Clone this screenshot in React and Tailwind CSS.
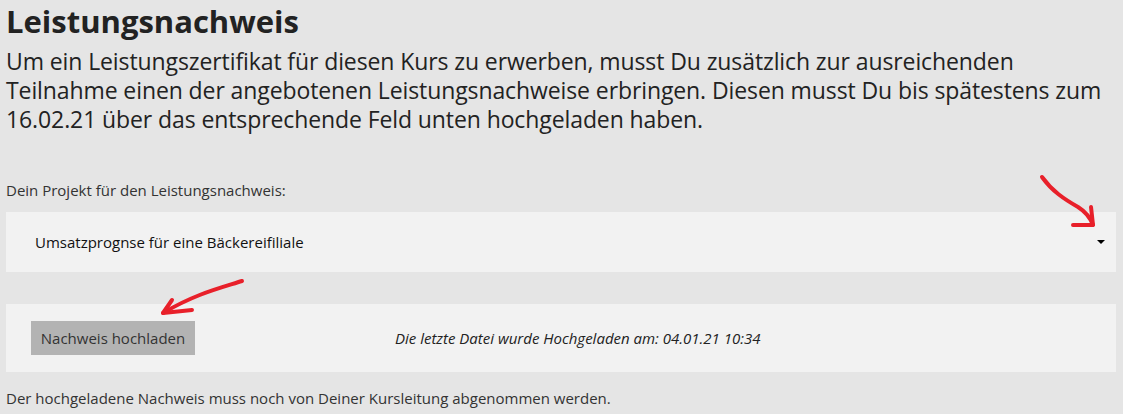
const font = { fontFamily: '"Open Sans", "Noto Sans", sans-serif' }

const ArrowToSelect = () => (
  <svg className="absolute left-[1030px] top-[165px] pointer-events-none" width="80" height="70" viewBox="0 0 80 70">
    <path
      d="M12 12 C 22 26, 34 34, 48 42 C 56 47, 60 52, 63 60"
      fill="none"
      stroke="#e8202a"
      strokeWidth="4"
      strokeLinecap="round"
    />
    <path d="M61 42 L 63 60 L 43 60" fill="none" stroke="#e8202a" strokeWidth="4" strokeLinecap="round" strokeLinejoin="round" />
  </svg>
)

const ArrowToButton = () => (
  <svg className="absolute left-[150px] top-[270px] pointer-events-none" width="110" height="60" viewBox="0 0 110 60">
    <path
      d="M92 11 C 70 18, 45 24, 13 43"
      fill="none"
      stroke="#e8202a"
      strokeWidth="4"
      strokeLinecap="round"
    />
    <path d="M22 30 L 13 43 L 42 40" fill="none" stroke="#e8202a" strokeWidth="4" strokeLinecap="round" strokeLinejoin="round" />
  </svg>
)

export default function App() {
  return (
    <div className="relative w-[1123px] h-[414px] overflow-hidden bg-[#e5e5e5] text-[#222]" style={font}>
      <div className="px-[6px]">
        <h1 className="text-[31px] font-bold leading-[40px] pt-[1px]">Leistungsnachweis</h1>
        <p className="mt-[6px] text-[23px] leading-[29px] whitespace-nowrap tracking-[-0.1px]">
          Um ein Leistungszertifikat für diesen Kurs zu erwerben, musst Du zusätzlich zur ausreichenden
          <br />
          Teilnahme einen der angebotenen Leistungsnachweise erbringen. Diesen musst Du bis spätestens zum
          <br />
          16.02.21 über das entsprechende Feld unten hochgeladen haben.
        </p>

        <div className="mt-[46px] text-[15px] leading-[20px] text-[#333]">Dein Projekt für den Leistungsnachweis:</div>

        {/* Projekt-Auswahl */}
        <div className="mt-[12px] h-[60px] w-[1110px] bg-[#f2f2f2] flex items-center pl-[29px] pr-[8px] text-[15px] text-[#111]">
          <span className="flex-1">Umsatzprognse für eine Bäckereifiliale</span>
          <span className="w-0 h-0 border-l-[4px] border-r-[4px] border-t-[4px] border-l-transparent border-r-transparent border-t-black mr-[3px]" />
        </div>

        {/* Upload */}
        <div className="mt-[32px] h-[68px] w-[1110px] bg-[#f2f2f2] flex items-center pl-[25px]">
          <button className="h-[34px] w-[164px] bg-[#b3b3b3] text-[15px] text-[#333]">Nachweis hochladen</button>
          <span className="ml-[200px] text-[15px] italic text-[#222]">Die letzte Datei wurde Hochgeladen am: 04.01.21 10:34</span>
        </div>

        <div className="mt-[16px] text-[15px] leading-[20px] text-[#333]">
          Der hochgeladene Nachweis muss noch von Deiner Kursleitung abgenommen werden.
        </div>
      </div>

      <ArrowToSelect />
      <ArrowToButton />
    </div>
  )
}
